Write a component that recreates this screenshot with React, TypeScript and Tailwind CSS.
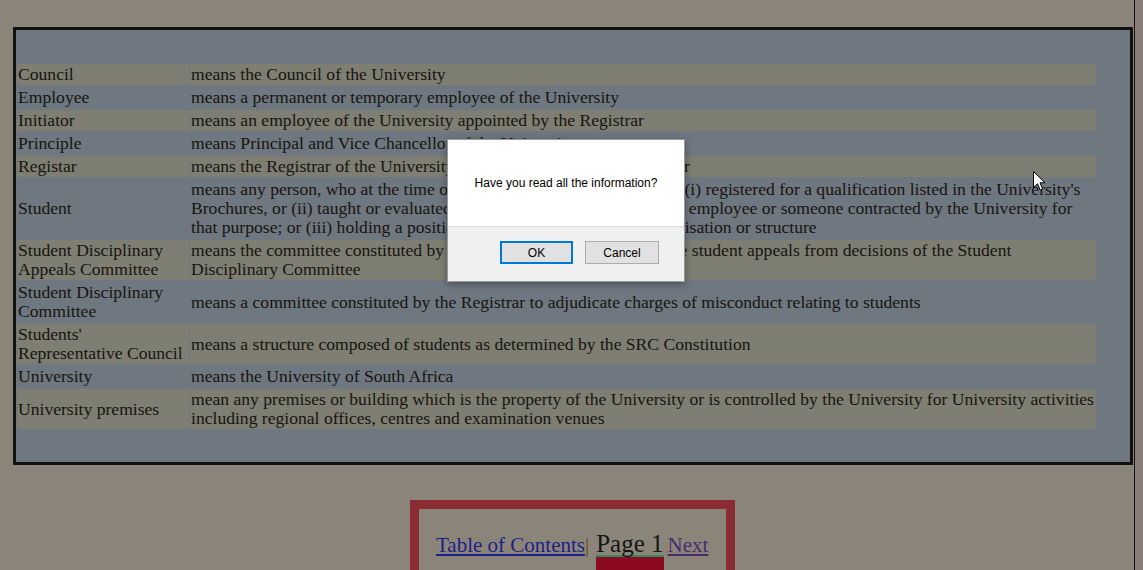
import React from "react";

type Term = { name: React.ReactNode; meaning: React.ReactNode };

const terms: Term[] = [
  { name: "Council", meaning: "means the Council of the University" },
  { name: "Employee", meaning: "means a permanent or temporary employee of the University" },
  { name: "Initiator", meaning: "means an employee of the University appointed by the Registrar" },
  { name: "Principle", meaning: "means Principal and Vice Chancellor of the University" },
  { name: "Registar", meaning: "means the Registrar of the University or any person acting as Registrar" },
  {
    name: "Student",
    meaning: (
      <>
        means any person, who at the time of alleged misconduct, was either: (i) registered for a qualification listed in the University's
        <br />
        Brochures, or (ii) taught or evaluated by the University itself, or by an employee or someone contracted by the University for
        <br />
        that purpose; or (iii) holding a position in any registered student organisation or structure
      </>
    ),
  },
  {
    name: (
      <>
        Student Disciplinary
        <br />
        Appeals Committee
      </>
    ),
    meaning: (
      <>
        means the committee constituted by the Council to hear and determine student appeals from decisions of the Student
        <br />
        Disciplinary Committee
      </>
    ),
  },
  {
    name: (
      <>
        Student Disciplinary
        <br />
        Committee
      </>
    ),
    meaning: "means a committee constituted by the Registrar to adjudicate charges of misconduct relating to students",
  },
  {
    name: (
      <>
        Students'
        <br />
        Representative Council
      </>
    ),
    meaning: "means a structure composed of students as determined by the SRC Constitution",
  },
  { name: "University", meaning: "means the University of South Africa" },
  {
    name: "University premises",
    meaning: (
      <>
        mean any premises or building which is the property of the University or is controlled by the University for University activities
        <br />
        including regional offices, centres and examination venues
      </>
    ),
  },
];

function ConfirmDialog() {
  return (
    <div className="absolute left-[447px] top-[139px] w-[238px] h-[143px] flex flex-col border border-[#9a9a9a] bg-white shadow-[0_2px_8px_rgba(0,0,0,0.35)] font-['Liberation_Sans',Arial,sans-serif] text-[12px] text-black">
      <div className="h-[86px] flex justify-center pt-[34px]">Have you read all the information?</div>
      <div className="flex-1 flex justify-end gap-3 pr-[25px] pt-[14px] border-t border-[#dfdfdf] bg-[#f0f0f0]">
        <button className="w-[73px] h-[23px] border-2 border-[#0078d7] bg-[#e1e1e1] leading-none">OK</button>
        <button className="w-[74px] h-[23px] border border-[#adadad] bg-[#e1e1e1] leading-none">Cancel</button>
      </div>
    </div>
  );
}

function Cursor() {
  return (
    <svg className="absolute left-[1033px] top-[171px]" width="13" height="20" viewBox="0 0 13 20">
      <path d="M0.5 0.5 L0.5 16.5 L4.5 12.8 L7.2 19 L9.6 18 L7 11.8 L12 11.8 Z" fill="#fff" stroke="#000" strokeWidth="1" strokeLinejoin="round" />
    </svg>
  );
}

export default function App() {
  return (
    <div className="relative h-[570px] w-[1143px] overflow-hidden flex bg-[#8b8579] font-['Liberation_Serif',Georgia,serif] text-[#17150f]">
      <div className="w-[1134px] shrink-0">
        {/* definitions panel */}
        <div className="ml-[13px] mt-[27px] w-[1120px] h-[438px] border-[3px] border-[#111111] bg-[#6f7780] pt-[32px] overflow-hidden">
          <table className="table-fixed w-[1081px] border-separate [border-spacing:1px_2px] text-[17.6px] leading-[19px]">
            <colgroup>
              <col className="w-[172px]" />
              <col className="w-[906px]" />
            </colgroup>
            <tbody>
              {terms.map((t, i) => (
                <tr key={i} className={i % 2 === 0 ? "bg-[#7e7e72]" : ""}>
                  <td className="p-px align-middle whitespace-nowrap">{t.name}</td>
                  <td className="p-px align-middle whitespace-nowrap">{t.meaning}</td>
                </tr>
              ))}
            </tbody>
          </table>
        </div>

        {/* page navigation */}
        <div className="mt-[35px] ml-[410px] w-[325px] h-[120px] border-[9px] border-[#8b2b33] pl-[17px] pt-[20px] whitespace-nowrap">
          <a className="text-[21px] text-[#1c1f8c] underline underline-offset-2">Table of Contents</a>
          <span className="text-[21px] text-[#6b4414]">|</span>{" "}
          <span className="inline-block align-baseline ml-[3px]">
            <span className="block text-[25px] leading-[23px] pt-[3px] text-[#141414] border-b-2 border-[#2f8a5c]">Page 1</span>
            <span className="block h-[30px] bg-[#8b0a22]" />
          </span>{" "}
          <a className="text-[21px] text-[#4a2a73] underline underline-offset-2">Next</a>
        </div>
      </div>
      <div className="flex-1 border-l border-[#141414] bg-[#8a7c76]" />

      <ConfirmDialog />
      <Cursor />
    </div>
  );
}
